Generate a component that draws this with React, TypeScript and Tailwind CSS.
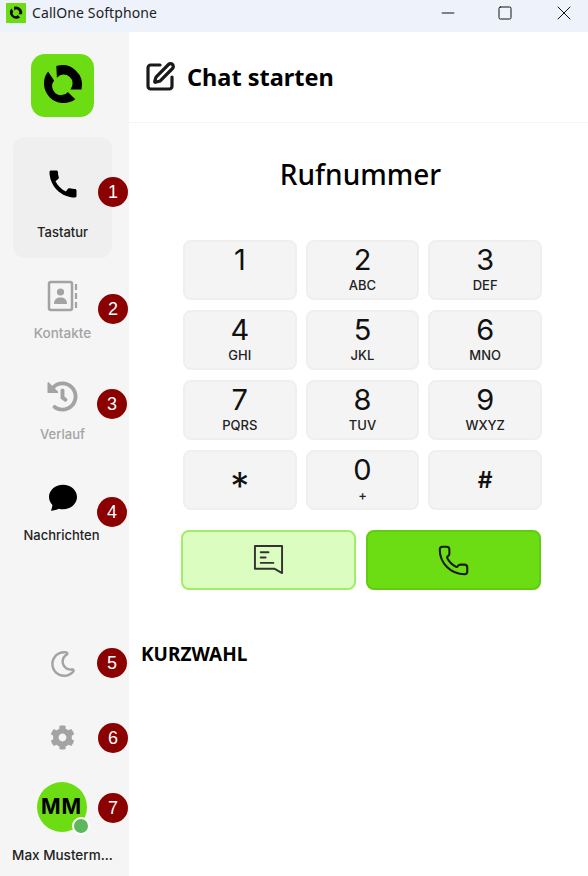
import { Phone, SquarePen, Minus, Square, X } from 'lucide-react'
import { MdCall } from 'react-icons/md'
import { FaHistory, FaRegMoon, FaCog } from 'react-icons/fa'
import { BsChatFill } from 'react-icons/bs'

const keys = [
  { n: '1', s: '' },
  { n: '2', s: 'ABC' },
  { n: '3', s: 'DEF' },
  { n: '4', s: 'GHI' },
  { n: '5', s: 'JKL' },
  { n: '6', s: 'MNO' },
  { n: '7', s: 'PQRS' },
  { n: '8', s: 'TUV' },
  { n: '9', s: 'WXYZ' },
]

function Badge({ n, className }: { n: number; className: string }) {
  return (
    <div
      className={`absolute flex h-[30px] w-[30px] items-center justify-center rounded-full bg-[#8b0000] font-['Liberation_Sans',sans-serif] text-[18px] text-white ${className}`}
    >
      {n}
    </div>
  )
}

function Logo({ size, radius }: { size: number; radius: string }) {
  return (
    <div
      className={`flex items-center justify-center bg-[#6cdd12] ${radius}`}
      style={{ width: size, height: size }}
    >
      <svg viewBox="0 0 64 64" className="h-full w-full">
        <path d="M25.700 12.300 A20 20 0 0 1 51.300 36 L40 36 A9 9 0 0 0 26.300 24 Z" fill="#000" />
        <path d="M17.300 17.700 A20 20 0 0 0 45 46 L37.500 38.500 A9 9 0 0 1 23.500 27 Z" fill="#000" />
      </svg>
    </div>
  )
}

function ContactsIcon() {
  return (
    <svg viewBox="0 0 32 32" className="h-8 w-8" fill="none">
      <rect x="2" y="2" width="23" height="28" rx="2" stroke="#a3a3a3" strokeWidth="2.5" />
      <circle cx="13.5" cy="12" r="3.6" fill="#a3a3a3" />
      <path d="M7 24 c0-5 3-6.5 6.5-6.5 s6.5 1.500 6.500 6.500 Z" fill="#a3a3a3" />
      <path d="M29 4 v6 M29 13 v6 M29 22 v6" stroke="#a3a3a3" strokeWidth="2.2" />
    </svg>
  )
}

function MessageIcon() {
  return (
    <svg viewBox="0 0 32 32" className="-mt-[2px] h-[31px] w-[31px]" fill="none" stroke="#333" strokeWidth="2" strokeLinejoin="round" strokeLinecap="round">
      <path d="M2 2 H30 V30 L22 25.500 H2 Z" />
      <path d="M8 8.500 H16 M8 14 H13 M8 19.500 H21" />
    </svg>
  )
}

export default function App() {
  return (
    <div className="relative flex h-[876px] w-[588px] flex-col overflow-hidden bg-white font-['Noto_Sans',sans-serif] text-black">
      {/* Title bar */}
      <div className="flex h-8 items-center bg-[#eef3fb] pb-[7px]">
        <div className="ml-1.5 mr-1.5">
          <Logo size={20} radius="rounded-none" />
        </div>
        <span className="text-[14px] tracking-[0.1px] text-[#222]">CallOne Softphone</span>
        <div className="ml-auto flex items-center gap-[39px] pr-3">
          <Minus size={20} strokeWidth={1.2} className="text-[#111]" />
          <Square size={16} strokeWidth={1.5} className="text-[#111]" />
          <X size={24} strokeWidth={1} className="text-[#111]" />
        </div>
      </div>

      <div className="flex flex-1">
        {/* Sidebar */}
        <aside className="flex w-[129px] flex-col items-center bg-[#f5f5f5] pr-1 font-['Inter',sans-serif]">
          <div className="mt-[22px]">
            <Logo size={63} radius="rounded-[14px]" />
          </div>
          <div className="mt-[20px] flex h-[121px] w-[99px] flex-col items-center rounded-xl bg-[#efefef] pt-[29px]">
            <MdCall size={36} className="text-black" />
            <span className="mt-[22px] text-[13px] font-medium leading-4 text-[#222]">Tastatur</span>
          </div>
          <div className="mt-[22px] flex w-full flex-col items-center">
            <ContactsIcon />
            <span className="mt-[13px] text-[13.5px] font-medium leading-4 text-[#a3a3a3]">Kontakte</span>
          </div>
          <div className="mt-[40px] flex w-full flex-col items-center">
            <FaHistory size={31} className="text-[#a3a3a3]" />
            <span className="mt-[14px] text-[13px] font-medium leading-4 text-[#a3a3a3]">Verlauf</span>
          </div>
          <div className="mt-[41px] flex w-full flex-col items-center">
            <BsChatFill size={28} className="text-black" />
            <span className="mt-[16px] -translate-x-px text-[13px] font-medium leading-4 text-[#222]">Nachrichten</span>
          </div>
          <div className="mt-[108px] flex w-full flex-col items-center">
            <FaRegMoon size={26} className="text-[#a3a3a3]" />
            <FaCog size={25} className="mt-[48px] text-[#a3a3a3]" />
            <div className="relative mt-[32px] flex h-[50px] w-[50px] -translate-x-px items-center justify-center rounded-full bg-[#6cdd12] text-[21px] font-bold tracking-[1px]">
              MM
              <div className="absolute bottom-[-3px] right-[-3px] h-[18px] w-[18px] rounded-full border-2 border-white bg-[#5cb85c]" />
            </div>
            <span className="mt-[15px] whitespace-nowrap text-[13.5px] font-medium leading-4 text-[#222]">Max Musterm...</span>
          </div>
        </aside>

        {/* Main */}
        <main className="flex flex-1 flex-col">
          <div className="flex h-[91px] items-center gap-[11px] border-b border-[#f5f5f5] pl-[15px]">
            <SquarePen size={32} strokeWidth={2.4} className="text-[#1a1a1a]" />
            <h1 className="mt-[2px] text-[23.5px] font-bold">Chat starten</h1>
          </div>
          <h2 className="mt-[31px] translate-x-[2px] text-center text-[28px] font-medium leading-10">Rufnummer</h2>
          <div className="mt-[46px] ml-[54px] grid w-[359px] grid-cols-3 gap-x-[9px] gap-y-[10px] font-['Inter',sans-serif]">
            {keys.map((k) => (
              <button
                key={k.n}
                className="flex h-[60px] flex-col items-center rounded-lg border-2 border-[#efefef] bg-[#f4f4f4]"
              >
                <span className="text-[29px] leading-[36px] text-[#111]">{k.n}</span>
                <span className="text-[13px] font-medium leading-[14px] text-[#222]">{k.s}</span>
              </button>
            ))}
            <button className="flex h-[60px] items-center justify-center rounded-lg border-2 border-[#efefef] bg-[#f4f4f4] pt-[12px]">
              <span className="text-[38px] leading-none text-[#111]">*</span>
            </button>
            <button className="flex h-[60px] flex-col items-center rounded-lg border-2 border-[#efefef] bg-[#f4f4f4]">
              <span className="text-[29px] leading-[36px] text-[#111]">0</span>
              <span className="text-[13px] font-medium leading-[14px] text-[#222]">+</span>
            </button>
            <button className="flex h-[60px] items-center justify-center rounded-lg border-2 border-[#efefef] bg-[#f4f4f4]">
              <span className="text-[23px] font-semibold leading-none text-[#111]">#</span>
            </button>
          </div>
          <div className="mt-5 ml-[52px] flex w-[360px] gap-[10px]">
            <button className="flex h-[60px] w-[175px] items-center justify-center rounded-lg border-2 border-[#a0ee68] bg-[#dcfdc0]">
              <MessageIcon />
            </button>
            <button className="flex h-[60px] w-[175px] items-center justify-center rounded-lg border-2 border-[#62cc10] bg-[#6cdd12]">
              <Phone size={33} strokeWidth={1.500} className="text-[#1a1a1a]" />
            </button>
          </div>
          <h3 className="mt-[52px] ml-3 text-[19px] font-bold leading-6">KURZWAHL</h3>
        </main>
      </div>

      {/* Annotation markers */}
      <Badge n={1} className="left-[98px] top-[177px]" />
      <Badge n={2} className="left-[98px] top-[294px]" />
      <Badge n={3} className="left-[97px] top-[389px]" />
      <Badge n={4} className="left-[97px] top-[497px]" />
      <Badge n={5} className="left-[97px] top-[648px]" />
      <Badge n={6} className="left-[98px] top-[723px]" />
      <Badge n={7} className="left-[98px] top-[793px]" />
    </div>
  )
}
